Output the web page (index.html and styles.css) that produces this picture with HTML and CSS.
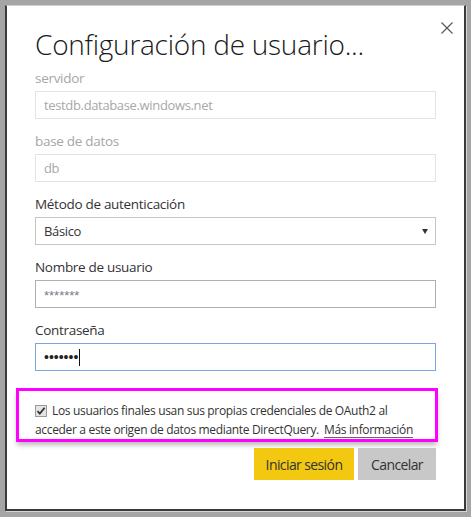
FILE: index.html
```html
<!DOCTYPE html>
<html lang="es">
<head>
<meta charset="utf-8">
<title>Configuración de usuario</title>
<link rel="stylesheet" href="styles.css">
</head>
<body>
<div class="dialog">
  <div class="header">
    <h1 class="title">Configuración de usuario...</h1>
    <button class="close" aria-label="Cerrar">
      <svg width="12" height="12" viewBox="0 0 12 12"><path d="M0.5 0.5L11.5 11.5M11.5 0.5L0.5 11.5" stroke="#555" stroke-width="1.1" fill="none"/></svg>
    </button>
  </div>
  <div class="field">
    <div class="label disabled">servidor</div>
    <div class="input disabled">testdb.database.windows.net</div>
  </div>
  <div class="field">
    <div class="label disabled">base de datos</div>
    <div class="input disabled">db</div>
  </div>
  <div class="field">
    <div class="label">Método de autenticación</div>
    <div class="input select"><span>Básico</span><span class="arrow"></span></div>
  </div>
  <div class="field">
    <div class="label">Nombre de usuario</div>
    <div class="input user">*******</div>
  </div>
  <div class="field">
    <div class="label">Contraseña</div>
    <div class="input focus"><span class="dots">•••••••</span><span class="caret"></span></div>
  </div>
  <div class="highlight">
    <p class="check-text"><span class="checkbox"><svg width="10" height="10" viewBox="0 0 10 10"><path d="M1.5 5.2L3.8 7.6L8.6 1.8" stroke="#333" stroke-width="1.8" fill="none"/></svg></span>Los usuarios finales usan sus propias credenciales de OAuth2 al acceder a este origen de datos mediante DirectQuery.<a class="link">Más información</a></p>
  </div>
  <div class="actions">
    <button class="btn primary">Iniciar sesión</button>
    <button class="btn secondary">Cancelar</button>
  </div>
</div>
</body>
</html>
```

FILE: styles.css
```css
* { box-sizing: border-box; }
html, body { margin: 0; padding: 0; }
body {
  background: #a5a5a5;
  width: 471px;
  height: 517px;
  padding: 5px 0 0 5px;
  font-family: "Open Sans", "Liberation Sans", sans-serif;
  color: #333;
  overflow: hidden;
}
.dialog {
  width: 461px;
  height: 506px;
  background: #fff;
  border-top: 1px solid #d0d0d0;
  border-left: 2px solid #3a3a3a;
  border-right: 2px solid #3a3a3a;
  border-bottom: 2px solid #3a3a3a;
  box-shadow: 1px 1px 0 #d6d6d6;
  padding: 0 28px 0 28px;
}
.header {
  display: flex;
  justify-content: space-between;
  align-items: flex-start;
  margin-right: -17px;
}
.title {
  margin: 18px 0 0 0;
  font-size: 28px;
  font-weight: 300;
  line-height: 40px;
  color: #1a1a1a;
  letter-spacing: -0.25px;
}
.close {
  border: 0;
  background: none;
  padding: 0;
  margin-top: 16px;
  width: 12px;
  height: 12px;
  display: block;
}
.close svg { display: block; }
.field { margin-top: 12px; }
.header + .field { margin-top: 4px; }
.label {
  font-size: 13.5px;
  line-height: 20px;
  margin-bottom: 3px;
  color: #333;
  letter-spacing: -0.3px;
}
.label.disabled { color: #a6a6a6; }
.input {
  height: 28px;
  border: 1px solid #c8c8c8;
  padding: 0 8px;
  font-size: 13px;
  line-height: 26px;
  color: #333;
  display: flex;
  align-items: center;
  letter-spacing: -0.35px;
}
.input.disabled { border-color: #e3e3e3; color: #a8a8a8; }
.input.select { justify-content: space-between; border-color: #c6c6c6; }
.arrow {
  width: 0; height: 0;
  border-left: 3.5px solid transparent;
  border-right: 3.5px solid transparent;
  border-top: 5px solid #333;
  margin-right: -1px;
}
.input.user {
  border-color: #b0b0b0;
  color: #7a7a8a;
  font-family: "Liberation Sans", sans-serif;
  font-size: 13px;
  letter-spacing: 0;
  padding-top: 3px;
}
.input.focus { border-color: #7aa6e4; }
.dots { font-family: "Liberation Sans", sans-serif; font-size: 14px; letter-spacing: 0; color: #222; }
.caret { width: 1px; height: 17px; background: #111; margin-left: 1px; }
.highlight {
  margin: 17px -2px 0 -19px;
  border: 3px solid #ff00ff;
  padding: 10px 8px 0 16px;
  box-shadow: 0 4px 5px -1px rgba(0,0,0,0.28);
}
.check-text {
  margin: 0;
  font-size: 12px;
  line-height: 19px;
  color: #333;
  letter-spacing: -0.33px;
}
.checkbox {
  display: inline-flex;
  align-items: center;
  justify-content: center;
  width: 12px;
  height: 12px;
  border: 1px solid #9a9a9a;
  background: #e4e4e4;
  margin-right: 5px;
  vertical-align: -1px;
}
.checkbox svg { display: block; }
.link {
  display: inline-block;
  margin-left: 5px;
  color: #333;
  text-decoration: underline;
  text-decoration-color: #666;
  text-underline-offset: 3px;
}
.actions {
  display: flex;
  justify-content: flex-end;
  gap: 4px;
  margin-top: 6px;
}
.btn {
  border: 0;
  height: 32px;
  font-family: inherit;
  font-size: 14px;
  letter-spacing: -0.6px;
  color: #333;
  padding: 0;
}
.primary { background: #f2c811; width: 100px; }
.secondary { background: #c8c8c8; width: 78px; }
```
